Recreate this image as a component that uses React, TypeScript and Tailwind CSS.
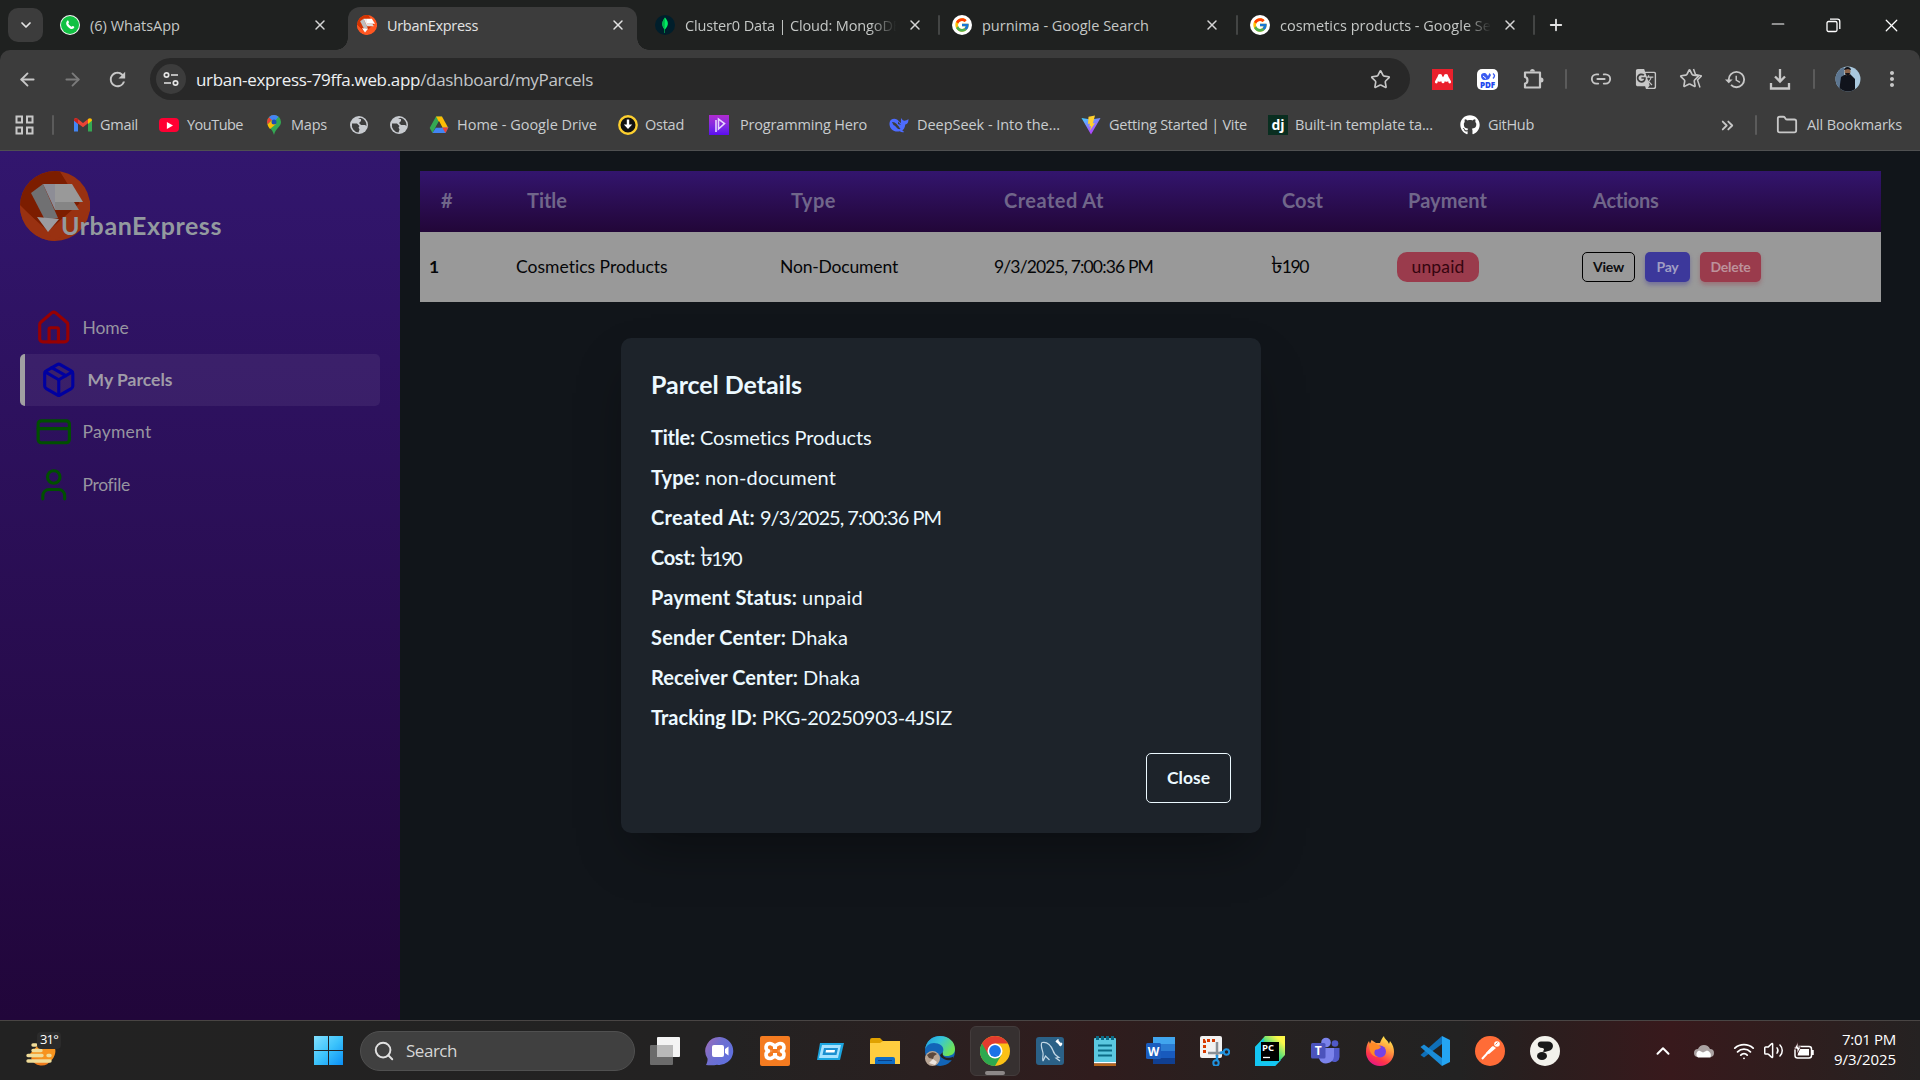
import React, { useLayoutEffect, useRef } from "react";
import {
  House, Package, CreditCard, User, X, Plus, ChevronDown, ChevronUp, ChevronsRight,
  ArrowLeft, ArrowRight, Star, Link2, Folder, Minus, Wifi, Volume2, Search,
} from "lucide-react";
import { FcGoogle } from "react-icons/fc";
import { FaGithub, FaWhatsapp } from "react-icons/fa";
import {
  MdHistory, MdGTranslate, MdRefresh, MdMoreVert,
} from "react-icons/md";

type TxtProps = { w: number; className?: string; children: React.ReactNode };

/* Text label whose tracking is adjusted so that it fills exactly `w` pixels. */
function Txt({ w, className = "", children }: TxtProps) {
  const ref = useRef<HTMLSpanElement>(null);
  useLayoutEffect(() => {
    const el = ref.current;
    if (!el) return;
    el.style.letterSpacing = "0px";
    const natural = el.getBoundingClientRect().width;
    const n = (el.textContent || "").length;
    el.style.letterSpacing = `${(w - natural) / n}px`;
  }, [w]);
  return (
    <span ref={ref} className={`inline-block shrink-0 whitespace-pre ${className}`}>
      {children}
    </span>
  );
}

function UrbanLogo({ dim = false, className = "" }: { dim?: boolean; className?: string }) {
  const c = dim
    ? { bg: "#993111", sh: "#7c1d00", a: "#999999", b: "#8d8d96", d: "#707072", e: "#858585", f: "#9b9ba0" }
    : { bg: "#ff5722", sh: "#d43300", a: "#ffffff", b: "#eeeeee", d: "#bdbdbd", e: "#dddddd", f: "#ffffff" };
  return (
    <svg viewBox="0 0 70 70" className={className}>
      <circle cx="35" cy="35" r="35" fill={c.bg} />
      <path d="M35 0A35 35 0 0 0 0 35L30 62 60 33 40 .4A35 35 0 0 0 35 0Z" fill={c.sh} />
      <path d="M0 34 27 61 36 70A35 35 0 0 1 0 34Z" fill={c.bg} />
      <path d="M40 0 70 30V40L50 60 34 70 27 61 60 32Z" fill={c.bg} />
      <path d="M11 22 23 13 38 47 25 49Z" fill={c.d} />
      <path d="M23 13H35V39Z" fill={c.b} />
      <path d="M35 13H52L63 31H35Z" fill={c.a} />
      <path d="M35 31H54L59 39H35Z" fill={c.e} />
      <path d="M17 46 39 48 28 61Z" fill={c.f} />
    </svg>
  );
}

function Tile({ children, className = "h-5 w-5" }: { children: React.ReactNode; className?: string }) {
  return <span className={`flex shrink-0 items-center justify-center ${className}`}>{children}</span>;
}

function GoogleFav() {
  return (
    <Tile className="h-5 w-5 rounded-full bg-white">
      <FcGoogle size={16} />
    </Tile>
  );
}

function Globe() {
  return (
    <svg viewBox="0 0 20 20" className="h-5 w-5 shrink-0">
      <circle cx="10" cy="10" r="9" fill="#c7cacf" />
      <path d="M3 8.500h5l2.500 2.500-1 1.500 1 2-1 3A7.500 7.500 0 0 1 3 8.500ZM9 4h3v2l-2 2 2 2h4l1.500 1a7.500 7.500 0 0 0-6-8.300Z" fill="#3c3c3c" />
    </svg>
  );
}

function Sep({ className }: { className: string }) {
  return <span className={`h-5 w-[2px] shrink-0 rounded bg-[#5b5b5b] ${className}`} />;
}

function TabStrip() {
  const t = "text-[14.5px] leading-5 pt-[2px] text-[#c5c8c6]";
  const x = "shrink-0 text-[#d5d5d5]";
  return (
    <div className="flex h-[50px] items-center bg-[#1f2120]">
      <Tile className="ml-2 h-[34px] w-[35px] rounded-[10px] bg-[#3c3c3c] text-[#e3e3e3]">
        <ChevronDown size={16} strokeWidth={2.6} />
      </Tile>
      <Tile className="ml-[17px] h-5 w-5 rounded-full bg-[#f4f8f5]">
        <span className="flex h-[18px] w-[18px] items-center justify-center rounded-full bg-[#12c143] text-white">
          <svg viewBox="0 0 16 16" className="h-4 w-4"><path d="M5 4c1-.8 1.500-.3 2 1.300L6.300 6.600C7 8 8 9 9.500 9.700L10.700 9c1.500.4 2 .9 1.300 2-2 2-4 .8-6-1S3.500 6 5 4Z" fill="#fff" /></svg>
        </span>
      </Tile>
      <Txt w={90} className={`ml-[10px] ${t}`}>(6) WhatsApp</Txt>
      <X size={16} strokeWidth={2.2} className={`ml-[132px] ${x}`} />
      <div className="relative ml-5 flex h-[43px] w-[289px] shrink-0 items-center self-end rounded-t-[12px] bg-[#3c3c3c] pb-[7px]">
        <span className="absolute bottom-0 -left-3 h-3 w-3 bg-[radial-gradient(circle_at_0_0,transparent_11.5px,#3c3c3c_12px)]" />
        <span className="absolute -right-3 bottom-0 h-3 w-3 bg-[radial-gradient(circle_at_100%_0,transparent_11.5px,#3c3c3c_12px)]" />
        <UrbanLogo className="ml-[9px] h-5 w-5 shrink-0" />
        <Txt w={91} className="ml-[10px] pt-[2px] text-[14.5px] leading-5 text-[#e3e3e3]">UrbanExpress</Txt>
        <X size={16} strokeWidth={2.2} className="ml-[132px] shrink-0 text-[#e3e3e3]" />
      </div>
      <svg viewBox="0 0 20 20" className="ml-[18px] h-5 w-5 shrink-0">
        <circle cx="10" cy="10" r="10" fill="#001e2b" />
        <path d="M10 2.500c3.500 4 4.200 7.500 0 12V18h-.5v-3.500C6 10 7 6.500 10 2.500Z" fill="#00ed64" />
        <path d="M10 2.500c-3 4-4 7.500-.3 12Z" fill="#00b54c" />
      </svg>
      <span className="ml-[10px] flex w-[220px] shrink-0 [mask-image:linear-gradient(to_right,#000_84%,transparent_96%)]">
        <Txt w={217} className={t}>Cluster0 Data | Cloud: MongoDB</Txt>
      </span>
      <X size={16} strokeWidth={2.2} className={`ml-[2px] ${x}`} />
      <Sep className="ml-[15px] mr-[12px] bg-[#434544]" />
      <GoogleFav />
      <Txt w={167} className={`ml-[10px] ${t}`}>purnima - Google Search</Txt>
      <X size={16} strokeWidth={2.2} className={`ml-[55px] ${x}`} />
      <Sep className="ml-[16px] mr-[12px] bg-[#434544]" />
      <GoogleFav />
      <span className="ml-[10px] flex w-[222px] shrink-0 [mask-image:linear-gradient(to_right,#000_84%,transparent_95%)]">
        <Txt w={219} className={t}>cosmetics products - Google Sea</Txt>
      </span>
      <X size={16} strokeWidth={2.2} className={`ml-0 ${x}`} />
      <Sep className="ml-[15px] mr-[12px] bg-[#434544]" />
      <Plus size={18} strokeWidth={2.4} className="shrink-0 text-[#e3e3e3]" />
      <div className="ml-auto flex items-center pr-[18px] text-white">
        <Minus size={20} strokeWidth={1.3} className="-mt-[2px]" />
        <svg viewBox="0 0 15 15" className="ml-[38px] h-[15px] w-[15px]" fill="none" stroke="#fff" strokeWidth="1.3">
          <rect x="1" y="3.500" width="10" height="10" rx="1.500" />
          <path d="M4 1.200h7.500a2.300 2.300 0 0 1 2.300 2.300V11" />
        </svg>
        <X size={21} strokeWidth={1.4} className="ml-[40px]" />
      </div>
    </div>
  );
}

function Toolbar() {
  return (
    <div className="flex h-[54px] items-center pt-1 text-[#c7c7c7]">
      <ArrowLeft size={21} strokeWidth={2.1} className="ml-[17px] shrink-0" />
      <ArrowRight size={21} strokeWidth={2.1} className="ml-6 shrink-0 text-[#7b7b7b]" />
      <MdRefresh size={23} className="ml-[23px] shrink-0" />
      <div className="ml-[21px] flex h-[42px] w-[1260px] shrink-0 items-center rounded-full bg-[#282828]">
        <Tile className="ml-[6px] h-[30px] w-[30px] rounded-full bg-[#3c3c3c]">
          <svg viewBox="0 0 16 16" className="h-4 w-4" fill="none" stroke="#e3e3e3" strokeWidth="1.7">
            <circle cx="3.500" cy="4" r="2.200" /><path d="M8 4h7M1 12h7" /><circle cx="12.500" cy="12" r="2.200" />
          </svg>
        </Tile>
        <Txt w={397} className="ml-[10px] pt-[2px] text-[17px] leading-6 text-[#c3c6c9]">
          <span className="text-[#eef0f2]">urban-express-79ffa.web.app</span>/dashboard/myParcels
        </Txt>
        <Star size={21} strokeWidth={1.9} strokeLinejoin="miter" className="mr-[19px] ml-auto" />
      </div>
      <Tile className="ml-[22px] h-[21px] w-[21px] bg-[#e9202c]">
        <svg viewBox="0 0 20 20" className="h-5 w-5" fill="#fff">
          <circle cx="7" cy="7.300" r="2.200" /><circle cx="13" cy="7.300" r="2.200" />
          <circle cx="3.300" cy="13" r="1.400" /><circle cx="10" cy="12.700" r="1.500" /><circle cx="16.700" cy="13" r="1.400" />
          <path d="M3 12.500c1-2 1.500-5 4-5s2 1.500 3 1.500.5-1.500 3-1.500 3 3 4 5M6.800 8l-.3 4.500M13.200 8l.3 4.500" stroke="#fff" strokeWidth="1.500" />
        </svg>
      </Tile>
      <Tile className="ml-6 h-[21px] w-[21px] flex-col rounded-[5px] bg-white">
        <svg viewBox="0 0 16 9" className="mt-[2px] h-[9px] w-4">
          <path d="M1 4c0-3 3-3.500 5-2.500L8 4l1.500-3L11 3l-2 4C6 9 1 8.500 1 4Z" fill="#3b5bf0" /><path d="M3 4l3 2.500" stroke="#fff" /><path d="M13 1.500c2 1.500 2 3 0 5" fill="none" stroke="#3b5bf0" strokeWidth="1.400" />
        </svg>
        <Txt w={15} className="-mt-[1px] text-[8px] leading-[9px] font-extrabold text-[#2448ee]">PDF</Txt>
      </Tile>
      <svg viewBox="0 0 24 24" className="ml-[23px] h-6 w-6 shrink-0" fill="none" stroke="#c7c7c7" strokeWidth="2.200" strokeLinejoin="round">
        <path d="M4 5.500h15V20.500H4v-4c3 0 3.500-6 0-6.500Z" />
        <path d="M9 4.500a2.500 2.500 0 0 1 5 0ZM20 10.500a2.500 2.500 0 0 1 0 5Z" fill="#c7c7c7" stroke="none" />
      </svg>
      <Sep className="ml-[20px]" />
      <Link2 size={22} strokeWidth={2} className="ml-[23px] shrink-0" />
      <MdGTranslate size={22} className="ml-[23px] shrink-0" />
      <span className="relative ml-[23px] h-[22px] w-[22px] shrink-0">
        <Star size={21} strokeWidth={1.9} strokeLinejoin="miter" className="absolute top-0 -left-[1px]" />
        <svg viewBox="0 0 22 22" className="absolute top-0 left-0 h-[22px] w-[22px]" fill="none" stroke="#c7c7c7" strokeWidth="1.500">
          <path d="M13.500 1 15.500 6.500 21.500 8 17.500 12l2.500 7.500" />
        </svg>
      </span>
      <MdHistory size={23} className="ml-[22px] shrink-0" />
      <svg viewBox="0 0 22 22" className="ml-[22px] h-[22px] w-[22px] shrink-0" fill="none" stroke="#c7c7c7" strokeWidth="2.300">
        <path d="M11 1v12M6 8.500l5 5 5-5M2 15v5.500h18V15" />
      </svg>
      <Sep className="ml-[22px]" />
      <svg viewBox="0 0 26 26" className="ml-[20px] h-[26px] w-[26px] shrink-0">
        <defs><clipPath id="av"><circle cx="13" cy="13" r="12.500" /></clipPath></defs>
        <g clipPath="url(#av)">
          <rect width="26" height="26" fill="#a9c8de" />
          <path d="M0 0h9v26H0Z" fill="#5d7690" />
          <path d="M4 26 6 11l5-3h4l5 5v13Z" fill="#10131c" />
          <ellipse cx="12.500" cy="5.500" rx="3" ry="4" fill="#8b6248" />
          <path d="M9 4c0-4 7-4 7 0l-3-1Zm1 3h5l-2 4Z" fill="#121319" />
        </g>
      </svg>
      <MdMoreVert size={24} className="ml-[19px] shrink-0" />
    </div>
  );
}

function Bookmarks() {
  const t = "text-[14.5px] text-[#c9cccf]";
  return (
    <div className="flex h-[42px] items-center">
      <svg viewBox="0 0 20 20" className="ml-[15px] h-5 w-5 shrink-0" fill="none" stroke="#c7c7c7" strokeWidth="2">
        <rect x="1.500" y="1.500" width="5.500" height="6" /><rect x="12" y="1.500" width="5.500" height="6" />
        <rect x="1.500" y="12.500" width="5.500" height="6" /><rect x="12" y="12.500" width="5.500" height="6" />
      </svg>
      <Sep className="ml-[17px]" />
      <svg viewBox="0 0 20 20" className="ml-[19px] h-5 w-5 shrink-0">
        <path d="M1 5v11.500h4V8Z" fill="#4285f4" /><path d="M19 5v11.500h-4V8Z" fill="#34a853" />
        <path d="M1 5.500C1 3 3 2.500 4.500 3.700L10 8l5.500-4.300 1 3.300L10 12.200 5 8.500Z" fill="#ea4335" />
        <path d="M15 4c2-1.500 4-.5 4 1.500L15 9Z" fill="#fbbc04" /><path d="M1 5.500C1 3.500 3 2.500 5 4v5Z" fill="#c5221f" />
      </svg>
      <Txt w={38} className={`ml-[7px] ${t}`}>Gmail</Txt>
      <Tile className="ml-[21px] h-[14px] w-5 rounded-[4px] bg-[#ff0033]">
        <svg viewBox="0 0 8 8" className="h-[7px] w-[7px]"><path d="M1 0 8 4 1 8Z" fill="#fff" /></svg>
      </Tile>
      <Txt w={56} className={`ml-2 ${t}`}>YouTube</Txt>
      <svg viewBox="0 0 20 20" className="ml-[21px] h-5 w-5 shrink-0">
        <path d="M10 0a7 7 0 0 0-7 7c0 5 5.500 6 7 13 1.500-7 7-8 7-13a7 7 0 0 0-7-7Z" fill="#34a853" />
        <path d="M3.500 9.500 12 0.500A7 7 0 0 0 3 7Z" fill="#ea4335" /><path d="M5 2.200 10 7l4.500-5.300A7 7 0 0 0 5 2.200Z" fill="#4285f4" />
        <path d="M3.500 9.500 8 5l4 4-6 5C5 12.500 4 11.500 3.500 9.500Z" fill="#fbbc04" /><circle cx="10" cy="7" r="2.500" fill="#1d4fb0" />
      </svg>
      <Txt w={36} className={`ml-[7px] ${t}`}>Maps</Txt>
      <span className="ml-[22px] flex gap-5"><Globe /><Globe /></span>
      <svg viewBox="0 0 20 20" className="ml-[20px] h-5 w-5 shrink-0">
        <path d="M7 1.500h6L6.500 12.500 3.500 18 .7 13Z" fill="#34a853" /><path d="M7 1.500h6L19.300 13h-6Z" fill="#fbbc04" />
        <path d="M7 12.500h12.300L16.500 18h-13Z" fill="#4285f4" /><path d="M13.200 12.500h6.100L16.500 18Z" fill="#ea4335" /><path d="m10 6 3.500 6.500h-7Z" fill="#3c3c3c" />
      </svg>
      <Txt w={140} className={`ml-2 ${t}`}>Home - Google Drive</Txt>
      <svg viewBox="0 0 20 20" className="ml-[21px] h-5 w-5 shrink-0">
        <circle cx="10" cy="10" r="8.700" fill="#111" stroke="#fccf2f" strokeWidth="2.400" />
        <path d="M8.800 4.500h2.400v5h3L10 14 5.800 9.500h3Z" fill="#fff" />
      </svg>
      <Txt w={39} className={`ml-[7px] ${t}`}>Ostad</Txt>
      <Tile className="ml-[25px] h-5 w-5 bg-linear-to-b from-[#b02ad0] to-[#5a08f0]">
        <svg viewBox="0 0 20 20" className="h-5 w-5" fill="none" stroke="#e6d4ff" strokeWidth="1.600"><path d="M7 17V5M9.500 14V4l6 4.500Z" /></svg>
      </Tile>
      <Txt w={127} className={`ml-[11px] ${t}`}>Programming Hero</Txt>
      <svg viewBox="0 0 20 20" className="ml-[22px] h-5 w-5 shrink-0">
        <path d="M.5 8C1 4 5 3 8 4.500c1.500 1 2 2.500 4 3.500 0-2-.5-3 .5-5 .5 2 1.500 2.500 3 2.700 1.500 0 2.500-.5 4-1.700 0 3.500-1 5-3.200 5.500-.3 3-1.500 5-3 6l2 1.500c-2 .5-3.500 0-4.500-.7C5 17.500 0 14 .5 8Z" fill="#4d6bfe" />
        <path d="M3 7c3-.5 6 3 8.500 7-3.500 1-4-3-7-4Zm6-.5 3 3.500-3-1Z" fill="#3c3c3c" />
      </svg>
      <Txt w={143} className={`ml-2 ${t}`}>DeepSeek - Into the...</Txt>
      <svg viewBox="0 0 20 20" className="ml-[21px] h-5 w-5 shrink-0">
        <defs>
          <linearGradient id="vt" x1="0" y1="0" x2=".6" y2="1"><stop stopColor="#41d1ff" /><stop offset="1" stopColor="#bd34fe" /></linearGradient>
        </defs>
        <path d="M.5 3 10 19.500 19.500 3 10 4.500Z" fill="url(#vt)" /><path d="M14 .5 7.500 1.700 7 9l2-.5-.7 3 1.800-.5L9 15.500 14 8l-2.200.5L14 .5Z" fill="#ffd02e" />
      </svg>
      <Txt w={138} className={`ml-2 ${t}`}>Getting Started | Vite</Txt>
      <Tile className="ml-[21px] h-5 w-5 bg-[#092e20] text-[14px] leading-none font-bold text-white">dj</Tile>
      <Txt w={138} className={`ml-[7px] ${t}`}>Built-in template ta...</Txt>
      <FaGithub size={20} className="ml-[27px] shrink-0 text-white" />
      <Txt w={46} className={`ml-2 ${t}`}>GitHub</Txt>
      <div className="ml-auto flex items-center pr-[18px]">
        <ChevronsRight size={19} strokeWidth={2.3} className="text-[#c7c7c7]" />
        <Sep className="ml-[18px]" />
        <Folder size={22} strokeWidth={2} className="ml-[19px] text-[#c7c7c7]" />
        <Txt w={95} className={`ml-[9px] ${t}`}>All Bookmarks</Txt>
      </div>
    </div>
  );
}

function Sidebar() {
  const row = "flex h-[52.5px] items-center pl-[15px] gap-[10px]";
  return (
    <aside className="w-[400px] shrink-0 bg-linear-to-b from-[#32166e] to-[#21063a] px-5 pt-5 text-[#9795a0]">
      <div className="flex h-[70px] items-end">
        <UrbanLogo dim className="h-[70px] w-[70px] shrink-0" />
        <Txt w={161} className="relative -ml-[29px] pb-px text-[25px] leading-[30px] font-bold text-[#939a9f]">UrbanExpress</Txt>
      </div>
      <nav className="mt-[60px]">
        <div className={row}>
          <House size={37.5} className="text-[#970002]" />
          <Txt w={46} className="pt-px text-[17.5px]">Home</Txt>
        </div>
        <div className="flex h-[52px] items-center gap-[10px] rounded-[5px] border-l-[5px] border-[#a1a0a2] bg-[#ffffff10] pl-[15px]">
          <Package size={37.5} className="text-[#0000a0]" />
          <Txt w={85} className="pt-[2px] text-[17.5px] font-bold text-[#a09ca8]">My Parcels</Txt>
        </div>
        <div className={row}>
          <CreditCard size={37.5} className="text-[#004f00]" />
          <Txt w={69} className="pt-px text-[17.5px]">Payment</Txt>
        </div>
        <div className={row}>
          <User size={37.5} className="text-[#004f00]" />
          <Txt w={47} className="pt-[2px] text-[17.5px]">Profile</Txt>
        </div>
      </nav>
    </aside>
  );
}

const columns: [string, number, string][] = [
  ["#", 14, "w-[86px]"], ["Title", 40, "w-[264px]"], ["Type", 45, "w-[213px]"], ["Created At", 100, "w-[278px]"],
  ["Cost", 41, "w-[126px]"], ["Payment", 79, "w-[185px]"], ["Actions", 66, "w-[309px]"],
];

function Taka({ w }: { w: number }) {
  return (
    <Txt w={w}>
      <span className="text-[1.35em] leading-none">৳</span>190
    </Txt>
  );
}

function ParcelTable() {
  const btn = "flex h-[30px] items-center justify-center rounded-[5px]";
  return (
    <table className="mt-5 ml-5 w-[1461px] table-fixed border-collapse self-start text-left text-[17.5px] text-[#050608]">
      <thead className="bg-linear-to-b from-[#33156e] to-[#220638] text-[20px] text-[#70668a]">
        <tr className="h-[61px]">
          {columns.map(([label, w, cls]) => (
            <th key={label} className={`${cls} p-0 pb-[3px] pl-[21px] font-bold`}><Txt w={w}>{label}</Txt></th>
          ))}
        </tr>
      </thead>
      <tbody className="bg-[#999999]">
        <tr className="h-[70px]">
          <td className="p-0 pl-[9px] font-bold"><Txt w={7}>1</Txt></td>
          <td className="p-0 pl-[10px]"><Txt w={152}>Cosmetics Products</Txt></td>
          <td className="p-0 pl-[10px]"><Txt w={118}>Non-Document</Txt></td>
          <td className="p-0 pl-[11px]"><Txt w={159}>9/3/2025, 7:00:36 PM</Txt></td>
          <td className="p-0 pl-[10px]"><Taka w={37} /></td>
          <td className="p-0 pl-[10px]">
            <span className="flex h-[30px] w-[82px] items-center justify-center rounded-[10px] bg-[#9a3b4c] text-[#35050f]">
              <Txt w={53}>unpaid</Txt>
            </span>
          </td>
          <td className="p-0 pl-[10px]">
            <div className="flex gap-[10px] text-[14px] font-bold">
              <span className={`${btn} w-[53px] border border-black pb-px text-[#0c0d0f]`}><Txt w={31}>View</Txt></span>
              <span className={`${btn} w-[45px] bg-[#3c389b] pb-px text-[#a09ec4] shadow-[0_3px_4px_#3c389b66]`}><Txt w={22}>Pay</Txt></span>
              <span className={`${btn} w-[61px] bg-[#9a3b4c] pb-px text-[#bd929b] shadow-[0_3px_4px_#9a3b4c66]`}><Txt w={40}>Delete</Txt></span>
            </div>
          </td>
        </tr>
      </tbody>
    </table>
  );
}

const details: [string, number, string, number][] = [
  ["Title:", 44, "Cosmetics Products", 172],
  ["Type:", 49, "non-document", 131],
  ["Created At:", 104, "9/3/2025, 7:00:36 PM", 181],
  ["Cost:", 44, "৳190", 41],
  ["Payment Status:", 146, "unpaid", 61],
  ["Sender Center:", 135, "Dhaka", 57],
  ["Receiver Center:", 147, "Dhaka", 57],
  ["Tracking ID:", 106, "PKG-20250903-4JSIZ", 190],
];

function ParcelModal() {
  return (
    <div className="absolute top-[187px] left-[621px] h-[495px] w-[640px] rounded-[10px] bg-[#1d232a] p-[30px] text-[#ecf9ff] shadow-[0_25px_50px_-12px_#00000060]">
      <h3 className="flex h-[33px] items-center text-[25px] font-bold"><Txt w={151}>Parcel Details</Txt></h3>
      <div className="mt-4 text-[20px]">
        {details.map(([k, kw, v, vw]) => (
          <p key={k} className="flex h-10 items-center gap-[5px]">
            <Txt w={kw} className="font-bold">{k}</Txt>
            {k === "Cost:" ? <Taka w={vw} /> : <Txt w={vw}>{v}</Txt>}
          </p>
        ))}
      </div>
      <div className="mt-4 flex justify-end">
        <button className="flex h-[50px] w-[85px] items-center justify-center rounded-[5px] border border-[#ecf9ff] text-[17.5px] font-bold">
          <Txt w={43}>Close</Txt>
        </button>
      </div>
    </div>
  );
}

const taskIcons: React.ReactNode[] = [
  <svg viewBox="0 0 30 30"><rect x="7" y="1" width="23" height="20" rx="1" fill="#f4f4f4" /><rect x="0" y="9" width="23" height="20" rx="1" fill="#6b6b6b" /><path d="M7 9h16v12H7Z" fill="#b9b9b9" /></svg>,
  <svg viewBox="0 0 30 30">
    <defs><linearGradient id="ch" x1="0" y1="0" x2="1" y2=".6"><stop stopColor="#a06cb8" /><stop offset=".5" stopColor="#6e6fd0" /><stop offset="1" stopColor="#5f70de" /></linearGradient></defs>
    <path d="M15 1a14 14 0 1 1-3 27.800C9 29.500 4 29.500 1 29c1-2 1.800-4 1.500-6.500A14 14 0 0 1 15 1Z" fill="url(#ch)" /><rect x="7" y="9" width="12" height="12" rx="2" fill="#fff" /><path d="m20 13 3.500-2.500v9L20 17Z" fill="#fff" />
  </svg>,
  <svg viewBox="0 0 30 30"><rect width="30" height="30" rx="2" fill="#f47b20" /><path d="M10 7.500c-5 0-5 6-1.500 7.500C5 16.500 5 22.500 10 22.500c2.500 0 3.500-2 5-2s2.500 2 5 2c5 0 5-6 1.500-7.500C25 13.500 25 7.500 20 7.500c-2.500 0-3.500 2-5 2s-2.500-2-5-2Z" fill="none" stroke="#fff" strokeWidth="3.600" /><path d="M11 12.500v5M19 12.500v5M12 15h6" stroke="#f47b20" strokeWidth="1.500" /><path d="M15 9v4M15 17v4" stroke="#fff" strokeWidth="4" /></svg>,
  <svg viewBox="0 0 30 30"><path d="M5 7h24l-4 17H2Z" fill="#1ba5e0" /><path d="M7 9h19l-3 13H4Z" fill="#a5e2ff" /><path d="M9 12h14l-1.500 7H7.500Z" fill="#1b8fd0" /><path d="M11 14h9l-.5 2.500h-9Z" fill="#fff" /></svg>,
  <svg viewBox="0 0 30 30"><path d="M0 4q0-2 2-2h8l3 3h15q2 0 2 2v21H0Z" fill="#e0a100" /><path d="M0 7h10l3-2h17v23H0Z" fill="#ffcd3f" /><path d="M5 28v-5q0-2 2-2h16q2 0 2 2v5Z" fill="#0f6cc5" /><path d="M8 24.500h14" stroke="#0a3f85" /></svg>,
  <svg viewBox="0 0 30 30">
    <defs><linearGradient id="ed" x1="0" y1="0" x2="1" y2=".5"><stop stopColor="#1e9de4" /><stop offset=".5" stopColor="#36c5d8" /><stop offset="1" stopColor="#6ee458" /></linearGradient></defs>
    <circle cx="15" cy="15" r="15" fill="#1265b8" /><path d="M0 14C1 5 7 0 15 0c9 0 15 6 15 13 0 5-4 7-8 7s-6-2-4-4c2-6-4-9-9-9S1 10 0 14Z" fill="url(#ed)" />
    <path d="M18 16c-2 6 6 7 10.500 4.500L28 24c-6 1-12-1-13-5Z" fill="#252222" /><circle cx="7.500" cy="22.500" r="7.500" fill="#b8a595" /><path d="M2 19q5-5 10-1l-3 2-1 3-4-1Z" fill="#5b473b" /><path d="m4 27 4-4 4 3-2 3Z" fill="#ece5df" />
  </svg>,
  <svg viewBox="0 0 30 30">
    <circle cx="15" cy="15" r="15" fill="#fbc116" /><path d="M15 15 2 7.500A15 15 0 0 0 15 30l6.500-11.200Z" fill="#2da94f" /><path d="M15 0A15 15 0 0 0 2 7.500L8.500 18.800 15 7.500h13A15 15 0 0 0 15 0Z" fill="#e33b2e" />
    <circle cx="15" cy="15" r="7.500" fill="#fff" /><circle cx="15" cy="15" r="5.900" fill="#1a73e8" />
  </svg>,
  <svg viewBox="0 0 30 30"><rect x="1" y="1" width="28" height="28" rx="3" fill="#2b6187" /><path d="M8 25c-1-3 .5-5 0-8S5 9 7 6.500c5-1 9 3 11 8 1 4 3 5 6 7l-3 .5 4 3M8 25l2.500-5 4 4" fill="none" stroke="#c3d8e6" strokeWidth="1.200" /><path d="m21.500 4.500 5 5" stroke="#fff" strokeWidth="2.500" /><path d="m21 6 2.500-2.500M24.500 9.500 27 7" stroke="#fff" strokeWidth="1.400" /></svg>,
  <svg viewBox="0 0 30 30"><rect x="4" y="2" width="22" height="25" rx="1" fill="#5bc8e0" /><path d="M4 26h22v1.500H4Z" fill="#fff" /><path d="M4 27.500h22V30H4Z" fill="#b5651d" /><path d="M8 9.500h14M8 14.500h14M8 19.500h14" stroke="#0b6b86" strokeWidth="2" /><path d="M7.500 0v4M12.500 0v4M17.500 0v4M22.500 0v4" stroke="#0b6b86" strokeWidth="3" /></svg>,
  <svg viewBox="0 0 30 30"><path d="M8 1h22v7H8Z" fill="#41a5ee" /><path d="M8 8h22v7H8Z" fill="#2b7cd3" /><path d="M8 15h22v7H8Z" fill="#185abd" /><path d="M8 22h22v6H8Z" fill="#103f91" /><rect x="1" y="7" width="15" height="16" rx="1.500" fill="#1b5dbe" /><text x="8.500" y="19.500" fontSize="12" fontWeight="700" textAnchor="middle" fill="#fff">W</text></svg>,
  <svg viewBox="0 0 30 30"><rect width="22" height="22" rx="2" fill="#f2f2f2" /><path d="M4.500 17V4.500H17" fill="none" stroke="#d83b01" strokeWidth="3" strokeDasharray="3 2" /><path d="M17 6v14M8 17h15" stroke="#8a9096" strokeWidth="2.500" /><circle cx="26.500" cy="16" r="2.700" fill="none" stroke="#1f93e0" strokeWidth="2" /><circle cx="16" cy="27" r="2.700" fill="none" stroke="#1f93e0" strokeWidth="2" /><path d="m17 19v5M20 17l4-1" stroke="#1f93e0" strokeWidth="2.500" /></svg>,
  <svg viewBox="0 0 30 30">
    <defs><linearGradient id="pc" x1="0" y1="1" x2="1" y2="0"><stop stopColor="#0bbef5" /><stop offset=".5" stopColor="#21d789" /><stop offset=".85" stopColor="#fcf84a" /></linearGradient></defs>
    <path d="M0 11 10 0h20v19L20 30H0Z" fill="url(#pc)" /><path d="M0 11 9 2l-3 24 20-2-6 6H0Z" fill="#14c6f3" /><rect x="6" y="6" width="18" height="19" fill="#000" /><text x="7" y="15" fontSize="9.500" fontWeight="700" fill="#fff">PC</text><path d="M8 21.500h7" stroke="#fff" strokeWidth="1.300" />
  </svg>,
  <svg viewBox="0 0 30 30"><circle cx="16" cy="6.500" r="4.800" fill="#7b83eb" /><circle cx="25" cy="7.500" r="3.300" fill="#5059c9" /><path d="M20 12h9.500v9a5 5 0 0 1-8 4Z" fill="#5059c9" /><path d="M9 12h15v8.500a7.800 7.800 0 0 1-15 2Z" fill="#7b83eb" /><rect x="1" y="7" width="14.500" height="15.500" rx="1.500" fill="#4b53bc" /><text x="8.200" y="19" fontSize="12" fontWeight="700" textAnchor="middle" fill="#fff">T</text></svg>,
  <svg viewBox="0 0 30 30">
    <defs><linearGradient id="ff" x1=".8" y1="0" x2=".3" y2="1"><stop stopColor="#fff44f" /><stop offset=".4" stopColor="#ff9640" /><stop offset=".75" stopColor="#ff3647" /><stop offset="1" stopColor="#e31587" /></linearGradient></defs>
    <path d="M19 0c0 3 4 4 5 8l1-3c3 4 4 7 4 11a14 14 0 0 1-28 0c0-5 1-8 3-11l1 3 1.500-4L11 7h4c1-3 2-5 4-7Z" fill="url(#ff)" /><circle cx="15" cy="15.500" r="6" fill="#7542e5" /><path d="M4 8c4-2 7-1 9 1l3 2c-2 3-4 2-6 3-2 5 1 6 3 7-6 0-9-5-9-13Z" fill="#ff8a26" />
  </svg>,
  <svg viewBox="0 0 30 30"><path d="M22 8 4 21.500 .5 19 22 0Z" fill="#0f6fb8" /><path d="M22 22 4 8.500 .5 11 22 30Z" fill="#1a8cd8" /><path d="M22 0 30 4v22l-8 4Z" fill="#24a5f2" /></svg>,
  <svg viewBox="0 0 30 30"><circle cx="15" cy="15" r="15" fill="#ff6c37" /><path d="M7 23 18 11" stroke="#fff" strokeWidth="2" /><path d="m11 17 7-7 3 2-7 6Z" fill="#fff" /><circle cx="22" cy="8" r="2.800" fill="#fff" /><path d="m20.500 8.500 2-2" stroke="#ff6c37" /></svg>,
  <svg viewBox="0 0 30 30"><circle cx="15" cy="15" r="15" fill="#f3f2ec" /><path d="M11 5.500h7c6 0 6.500 7 2 9l-3.500 1c-1 .5-2 .5-4 0 2-1 2-3 0-3.500-6 0-6-6.500-1.500-6.500Z" fill="#191919" /><ellipse cx="12" cy="20" rx="5" ry="4" fill="#191919" /></svg>,
];

function Taskbar() {
  return (
    <footer className="flex h-[60px] items-center border-t border-[#494544] bg-[linear-gradient(90deg,#222_0%,#232222_38%,#2a2020_48%,#301c1d_57%,#262120_66%,#222_76%,#2a1e1e_80%,#38191c_87%,#2e1e1e_94%,#252222_100%)] text-white">
      <div className="relative ml-[26px] h-[38px] w-[34px] shrink-0">
        <svg viewBox="0 0 34 38" className="h-[38px] w-[34px]">
          <path d="M4 22a12.500 12.500 0 0 0 25-6V13H12Z" fill="#f7931e" /><path d="M5 26a11 11 0 0 0 20 2Z" fill="#ee7b1c" />
          <path d="M7 13h3M7 18.500h8M2 23.500h14M22 23.500h2M2 29h22" stroke="#f0dc98" strokeWidth="3.400" strokeLinecap="round" />
        </svg>
        <span className="absolute top-0 left-[11px] flex h-[17px] w-6 items-center justify-center rounded bg-[#2b2b2b] text-[13px]"><Txt w={18}>31°</Txt></span>
      </div>
      <svg viewBox="0 0 29 29" className="ml-[254px] h-[29px] w-[29px] shrink-0">
        <defs><linearGradient id="wn" x1="0" y1="0" x2="1" y2="1"><stop stopColor="#82e0ff" /><stop offset=".5" stopColor="#3cc3fb" /><stop offset="1" stopColor="#0a8ff5" /></linearGradient></defs>
        <path d="M0 0h14v14H0ZM15 0h14v14H15ZM0 15h14v14H0ZM15 15h14v14H15Z" fill="url(#wn)" />
      </svg>
      <div className="ml-[17px] flex h-10 w-[275px] shrink-0 items-center rounded-full border border-[#505050] bg-[#404040]">
        <Search size={22} strokeWidth={2.1} className="ml-[12px] text-[#e0e0e0]" />
        <Txt w={51} className="ml-[11px] text-[17px] text-[#d6d6d6]">Search</Txt>
      </div>
      <div className="ml-[2px] flex shrink-0">
        {taskIcons.map((icon, i) => (
          <span key={i} className="flex w-[55px] justify-center">
            <span className={i === 6
              ? "relative flex h-[50px] w-[50px] items-center justify-center rounded-md border border-[#433c3c] bg-[#363030]"
              : "flex h-[50px] w-[50px] items-center justify-center"}>
              <span className="h-[30px] w-[30px]">{icon}</span>
              {i === 6 && <span className="absolute bottom-0 h-1 w-5 rounded-full bg-[#8d8888]" />}
            </span>
          </span>
        ))}
      </div>
      <div className="ml-auto flex items-center pr-6">
        <ChevronUp size={22} strokeWidth={2.2} />
        <svg viewBox="0 0 20 14" className="ml-[20px] h-[14px] w-5"><path d="M4 13a4 4 0 0 1 0-8 6.500 6.500 0 0 1 12 0 4 4 0 0 1 0 8Z" fill="#aaa2a2" /><path d="M4 13.500a4 4 0 0 1 1-7l4 2 4-2a5 5 0 0 1 3.500 7Z" fill="#fff" /></svg>
        <Wifi size={22} strokeWidth={2} className="ml-[19px]" />
        <Volume2 size={21} strokeWidth={1.7} className="ml-[8px]" />
        <svg viewBox="0 0 22 18" className="ml-[9px] h-[18px] w-[22px]"><rect x="2" y="4.500" width="16.500" height="11.500" rx="2.500" fill="none" stroke="#fff" strokeWidth="1.500" /><path d="M6 7h10v6.500H4.500Z" fill="#fff" /><path d="M19.500 8v5" stroke="#fff" strokeWidth="2.500" /><path d="M5 0v5h3l-4 7V7H1Z" fill="#fff" stroke="#38191c" strokeWidth=".8" /></svg>
        <div className="-mt-1 ml-[19px] flex w-[62px] flex-col items-end text-[15px] leading-5">
          <Txt w={54}>7:01 PM</Txt>
          <Txt w={62}>9/3/2025</Txt>
        </div>
      </div>
    </footer>
  );
}

export default function App() {
  return (
    <div className="flex h-[1080px] w-[1920px] flex-col overflow-hidden bg-[#1f2120] font-['Open_Sans','Noto_Sans',sans-serif]">
      <TabStrip />
      <div className="h-[101px] shrink-0 rounded-t-[10px] border-b border-[#4f5051] bg-[#3c3c3c]">
        <Toolbar />
        <Bookmarks />
      </div>
      <main className="relative flex h-[869px] shrink-0 bg-[#11151a] font-['Lato','Noto_Sans',sans-serif]">
        <Sidebar />
        <ParcelTable />
        <ParcelModal />
      </main>
      <Taskbar />
    </div>
  );
}
